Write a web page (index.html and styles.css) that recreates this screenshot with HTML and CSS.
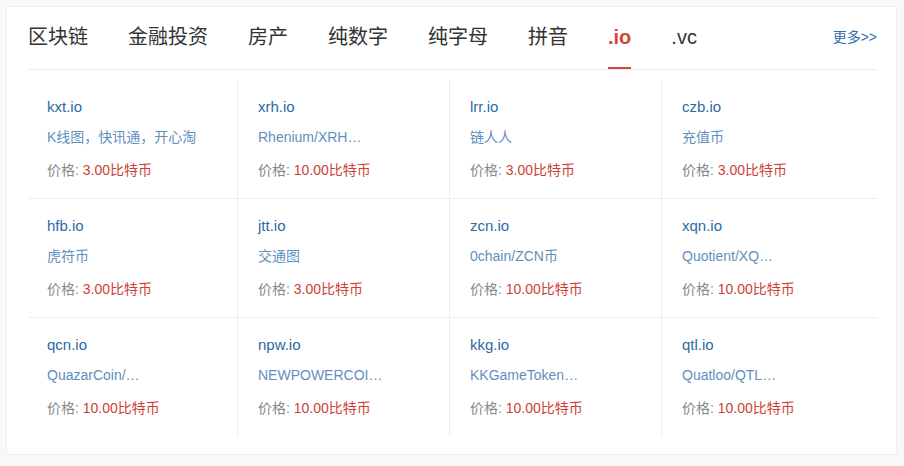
FILE: index.html
```html
<!DOCTYPE html>
<html lang="zh-CN">
<head>
<meta charset="utf-8">
<title>域名</title>
<link rel="stylesheet" href="styles.css">
</head>
<body>
<div class="card">
  <div class="tabs">
    <span class="tab">区块链</span>
    <span class="tab">金融投资</span>
    <span class="tab">房产</span>
    <span class="tab">纯数字</span>
    <span class="tab">纯字母</span>
    <span class="tab">拼音</span>
    <span class="tab active">.io</span>
    <span class="tab">.vc</span>
    <a class="more">更多&gt;&gt;</a>
  </div>
  <div class="grid">
    <div class="cell"><div class="name">kxt.io</div><div class="desc">K线图，快讯通，开心淘</div><div class="price"><span class="label">价格: </span>3.00比特币</div></div>
    <div class="cell"><div class="name">xrh.io</div><div class="desc">Rhenium/XRH…</div><div class="price"><span class="label">价格: </span>10.00比特币</div></div>
    <div class="cell"><div class="name">lrr.io</div><div class="desc">链人人</div><div class="price"><span class="label">价格: </span>3.00比特币</div></div>
    <div class="cell last-col"><div class="name">czb.io</div><div class="desc">充值币</div><div class="price"><span class="label">价格: </span>3.00比特币</div></div>

    <div class="cell"><div class="name">hfb.io</div><div class="desc">虎符币</div><div class="price"><span class="label">价格: </span>3.00比特币</div></div>
    <div class="cell"><div class="name">jtt.io</div><div class="desc">交通图</div><div class="price"><span class="label">价格: </span>3.00比特币</div></div>
    <div class="cell"><div class="name">zcn.io</div><div class="desc">0chain/ZCN币</div><div class="price"><span class="label">价格: </span>10.00比特币</div></div>
    <div class="cell last-col"><div class="name">xqn.io</div><div class="desc">Quotient/XQ…</div><div class="price"><span class="label">价格: </span>10.00比特币</div></div>

    <div class="cell last-row"><div class="name">qcn.io</div><div class="desc">QuazarCoin/…</div><div class="price"><span class="label">价格: </span>10.00比特币</div></div>
    <div class="cell last-row"><div class="name">npw.io</div><div class="desc">NEWPOWERCOI…</div><div class="price"><span class="label">价格: </span>10.00比特币</div></div>
    <div class="cell last-row"><div class="name">kkg.io</div><div class="desc">KKGameToken…</div><div class="price"><span class="label">价格: </span>10.00比特币</div></div>
    <div class="cell last-row last-col"><div class="name">qtl.io</div><div class="desc">Quatloo/QTL…</div><div class="price"><span class="label">价格: </span>10.00比特币</div></div>
  </div>
</div>
</body>
</html>
```
FILE: styles.css
```css
html, body {
  margin: 0;
  padding: 0;
}
body {
  background: #f8f8f8;
  font-family: "Liberation Sans", "Noto Sans CJK SC", sans-serif;
  width: 904px;
  height: 466px;
  overflow: hidden;
}
.card {
  box-sizing: border-box;
  margin: 6px 7px 0 6px;
  width: 891px;
  height: 449px;
  background: #fff;
  border: 1px solid #f0f0f0;
  padding: 0 19px 0 21px;
}
.tabs {
  display: flex;
  align-items: flex-start;
  gap: 40px;
  border-bottom: 1px solid #ececec;
}
.tab {
  font-size: 20px;
  line-height: 28px;
  color: #333;
  padding: 16px 0 16px;
  border-bottom: 2px solid transparent;
}
.tab.active {
  color: #d6453b;
  font-weight: bold;
  border-bottom-color: #d6453b;
}
.more {
  margin-left: auto;
  font-size: 14px;
  line-height: 28px;
  padding-top: 16px;
  color: #3470ad;
}
.grid {
  margin-top: 10px;
  display: grid;
  grid-template-columns: 210px 212px 212px 1fr;
  grid-template-rows: repeat(3, 119px);
}
.cell {
  box-sizing: border-box;
  padding: 12px 0 0 20px;
  border-right: 1px solid #eeeeee;
  border-bottom: 1px solid #eeeeee;
  font-size: 14px;
}
.cell:nth-child(4n+1) {
  padding-left: 19px;
}
.cell.last-col {
  border-right: none;
}
.cell.last-row {
  border-bottom: none;
}
.name {
  line-height: 30px;
  font-size: 15px;
  color: #2d6aa3;
}
.desc {
  line-height: 30px;
  color: #5f8fbd;
}
.price {
  margin-top: 2px;
  line-height: 32px;
  color: #cc3f36;
  font-size: 14px;
}
.label {
  color: #888;
}
```
